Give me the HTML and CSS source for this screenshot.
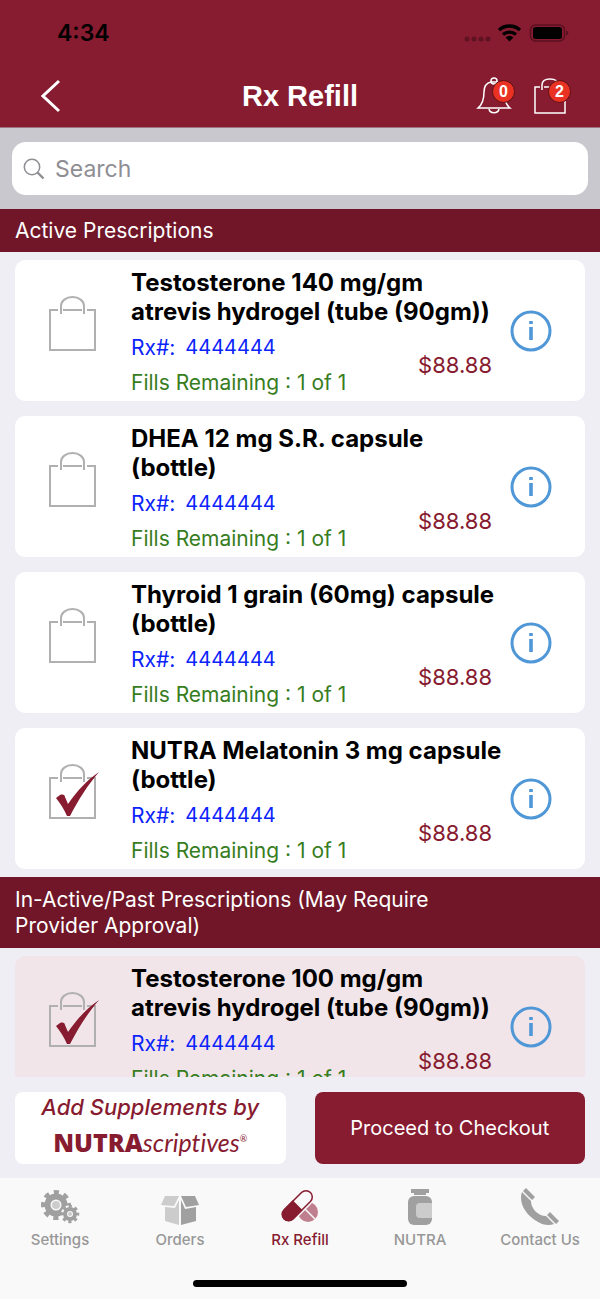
FILE: index.html
```html
<!DOCTYPE html>
<html lang="en">

<head>
    <meta charset="UTF-8">
    <meta name="viewport" content="width=device-width, initial-scale=1">
    <title>Rx Refill</title>
    <link rel="stylesheet" href="styles.css">
</head>

<body>
    <!-- shared icons -->
    <svg class="defs" aria-hidden="true">
        <symbol id="bag" viewBox="0 0 52 58">
            <path d="M10 15H2v40h45V15h-8M15 15h19M13 19v-8c0-5 5-9 11.500-9S36 6 36 11v8" fill="none" stroke="#b0b0b0" stroke-width="2"/>
        </symbol>
        <symbol id="check" viewBox="0 0 52 58">
            <path d="M8 35l4-3c3-1 5 0 5 2l3 7C29 28 39 17 51 9 39 23 31 36 22 53h-3C16 46 12 40 8 35z" fill="#871b30"/>
        </symbol>
        <symbol id="info" viewBox="0 0 42 42">
            <circle cx="21" cy="21" r="19" fill="none" stroke="#4f97d7" stroke-width="3"/>
            <path d="M19.200 11h3.600v3h-3.600zM19.200 17h3.600v13h-3.600z" fill="#4f97d7"/>
        </symbol>
    </svg>

    <header class="header">
        <div class="status">
            <span class="time">4:34</span>
            <svg class="status-icons" width="106" height="20" viewBox="0 0 106 20">
                <g fill="#5f1322">
                    <circle cx="4" cy="16" r="2.500"/>
                    <circle cx="11" cy="16" r="2.500"/>
                    <circle cx="18" cy="16" r="2.500"/>
                    <circle cx="25" cy="16" r="2.500"/>
                </g>
                <g fill="none" stroke="#000" stroke-width="3.400">
                    <path d="M36 7a16 16 0 0 1 21 0"/>
                    <path d="M40 11.500a10 10 0 0 1 13 0"/>
                </g>
                <path d="M42.600 14.500a6 6 0 0 1 7.800 0L46.500 18.500z"/>
                <rect x="67.500" y="2" width="34" height="16" rx="5" fill="none" stroke="#5a1020" stroke-width="1.500"/>
                <rect x="70" y="4" width="29" height="12" rx="2.500"/>
                <path d="M103 7.500c3 1 3 4 0 5z" fill="#5a1020"/>
            </svg>
        </div>
        <nav class="nav">
            <button class="icon-btn back" aria-label="Back">
                <svg width="20" height="34" viewBox="0 0 20 34"><path d="M18 2L2 17l16 15" fill="none" stroke="#fff" stroke-width="3"/></svg>
            </button>
            <h1>Rx Refill</h1>
            <div class="nav-right">
                <button class="icon-btn" aria-label="Notifications">
                    <svg width="36" height="38" viewBox="0 0 36 38" fill="none" stroke="#fff" stroke-width="1.500">
                        <path d="M2 31h32c-5-4-6-9-6-16 0-6-3-9-7-10h-6C10 6 8 10 8 15c0 7-1 12-6 16z"/>
                        <circle cx="18" cy="4" r="3"/>
                        <path d="M13 32c1 5 9 5 10 0"/>
                    </svg>
                    <span class="badge">0</span>
                </button>
                <button class="icon-btn" aria-label="Cart">
                    <svg width="36" height="38" viewBox="0 0 36 38" fill="none" stroke="#fff" stroke-width="1.500">
                        <path d="M8 10H3v26h30V10h-5M12 10h12M10 13V8c0-4 3-6 8-6s8 2 8 6v5"/>
                    </svg>
                    <span class="badge">2</span>
                </button>
            </div>
        </nav>
    </header>

    <div class="search">
        <label class="search-box">
            <svg width="22" height="22" viewBox="0 0 22 22" fill="none" stroke="#8e8e93"><circle cx="9" cy="9" r="7.700" stroke-width="1.500"/><path d="M14.500 14.500l6 6" stroke-width="2.400"/></svg>
            <input type="search" placeholder="Search" aria-label="Search">
        </label>
    </div>

    <main class="list">
        <h2>Active Prescriptions</h2>
        <ul>
            <li class="card">
                <button class="icon-btn pick" aria-label="Add to bag"><svg width="52" height="58"><use href="#bag"/></svg></button>
                <div class="detail">
                    <h3>Testosterone 140 mg/gm atrevis hydrogel (tube (90gm))</h3>
                    <p class="rx"><span>Rx#:</span><span class="num">4444444</span></p>
                    <p class="fills">Fills Remaining : 1 of 1</p>
                    <p class="price">$88.88</p>
                </div>
                <button class="icon-btn" aria-label="Info"><svg width="42" height="42"><use href="#info"/></svg></button>
            </li>
            <li class="card">
                <button class="icon-btn pick" aria-label="Add to bag"><svg width="52" height="58"><use href="#bag"/></svg></button>
                <div class="detail">
                    <h3>DHEA 12 mg S.R. capsule (bottle)</h3>
                    <p class="rx"><span>Rx#:</span><span class="num">4444444</span></p>
                    <p class="fills">Fills Remaining : 1 of 1</p>
                    <p class="price">$88.88</p>
                </div>
                <button class="icon-btn" aria-label="Info"><svg width="42" height="42"><use href="#info"/></svg></button>
            </li>
            <li class="card">
                <button class="icon-btn pick" aria-label="Add to bag"><svg width="52" height="58"><use href="#bag"/></svg></button>
                <div class="detail">
                    <h3>Thyroid 1 grain (60mg) capsule (bottle)</h3>
                    <p class="rx"><span>Rx#:</span><span class="num">4444444</span></p>
                    <p class="fills">Fills Remaining : 1 of 1</p>
                    <p class="price">$88.88</p>
                </div>
                <button class="icon-btn" aria-label="Info"><svg width="42" height="42"><use href="#info"/></svg></button>
            </li>
            <li class="card">
                <button class="icon-btn pick" aria-label="Remove from bag"><svg width="52" height="58"><use href="#bag"/><use href="#check"/></svg></button>
                <div class="detail">
                    <h3>NUTRA Melatonin 3 mg capsule (bottle)</h3>
                    <p class="rx"><span>Rx#:</span><span class="num">4444444</span></p>
                    <p class="fills">Fills Remaining : 1 of 1</p>
                    <p class="price">$88.88</p>
                </div>
                <button class="icon-btn" aria-label="Info"><svg width="42" height="42"><use href="#info"/></svg></button>
            </li>
        </ul>
        <h2 class="inactive">In-Active/Past Prescriptions (May Require Provider Approval)</h2>
        <ul>
            <li class="card past">
                <button class="icon-btn pick" aria-label="Remove from bag"><svg width="52" height="58"><use href="#bag"/><use href="#check"/></svg></button>
                <div class="detail">
                    <h3>Testosterone 100 mg/gm atrevis hydrogel (tube (90gm))</h3>
                    <p class="rx"><span>Rx#:</span><span class="num">4444444</span></p>
                    <p class="fills">Fills Remaining : 1 of 1</p>
                    <p class="price">$88.88</p>
                </div>
                <button class="icon-btn" aria-label="Info"><svg width="42" height="42"><use href="#info"/></svg></button>
            </li>
        </ul>
    </main>

    <div class="actions">
        <button class="supplements">
            <span class="add">Add Supplements by</span>
            <span class="brand"><b>NUTRA</b><i>scriptives</i><sup>®</sup></span>
        </button>
        <button class="checkout">Proceed to Checkout</button>
    </div>

    <footer class="footer">
        <nav class="tabs">
            <a href="#settings">
                <svg width="40" height="40" viewBox="0 0 40 40">
                    <circle cx="16" cy="17" r="8.500" fill="none" stroke="#a0a0a0" stroke-width="6"/>
                    <circle cx="16" cy="17" r="12.500" fill="none" stroke="#a0a0a0" stroke-width="5" stroke-dasharray="5 4.817" stroke-dashoffset="2.500"/>
                    <circle cx="16" cy="17" r="4" fill="#ccc"/>
                    <circle cx="30" cy="26" r="9" fill="#f9f9f9"/>
                    <circle cx="30" cy="26" r="5" fill="none" stroke="#a0a0a0" stroke-width="4"/>
                    <circle cx="30" cy="26" r="7.500" fill="none" stroke="#a0a0a0" stroke-width="3.500" stroke-dasharray="3 2.890" stroke-dashoffset="1.500"/>
                    <circle cx="30" cy="26" r="2" fill="#ccc"/>
                </svg>
                Settings
            </a>
            <a href="#orders">
                <svg width="40" height="40" viewBox="0 0 40 40">
                    <path d="M5 8h14l-5 10-13-1z" fill="#ccc"/>
                    <path d="M21 8h14l4 9-13 2z" fill="#a0a0a0"/>
                    <path d="M5 19l10 1 4-8v25L5 33z" fill="#ccc"/>
                    <path d="M21 12l4 9 11-2v14l-15 4z" fill="#a0a0a0"/>
                </svg>
                Orders
            </a>
            <a href="#refill" class="active">
                <svg width="40" height="40" viewBox="0 0 40 40">
                    <circle cx="28" cy="24" r="10" fill="#c07f8f"/>
                    <path d="M21 17l14 14" stroke="#f9f9f9" stroke-width="1.500"/>
                    <g transform="rotate(45 17 18)">
                        <rect x="8.500" y="-2" width="17" height="40" rx="8.500" fill="#f9f9f9"/>
                        <rect x="10.700" y="-1" width="12.600" height="37" rx="6.300" fill="#f9f9f9" stroke="#871b30" stroke-width="1.500"/>
                        <path d="M10 17h14v13a7 7 0 0 1-14 0z" fill="#871b30"/>
                    </g>
                </svg>
                Rx Refill
            </a>
            <a href="#nutra">
                <svg width="40" height="40" viewBox="0 0 40 40">
                    <path d="M11 1h18v4h-3v2H14V5h-3z" fill="#a0a0a0"/>
                    <rect x="8" y="8" width="24" height="29" rx="6" fill="#a0a0a0"/>
                    <path d="M32 15H20q-4 0-4 4v7q0 4 4 4h12z" fill="#ccc"/>
                </svg>
                NUTRA
            </a>
            <a href="#contact">
                <svg width="40" height="40" viewBox="0 0 40 40" fill="#a0a0a0">
                    <path d="M2 4C-1 12 3 22 11 29c7 6 15 10 23 7l-8-8c-4 0-8-2-11-5-3-4-4-7-4-10z"/>
                    <path d="M6 0l9 9-3 3-9-9zM30 24l9 9-3 3-9-9z"/>
                </svg>
                Contact Us
            </a>
        </nav>
        <div class="home"></div>
    </footer>
</body>

</html>
```

FILE: styles.css
```css
* {
    box-sizing: border-box;
    margin: 0;
    padding: 0;
}

body {
    display: flex;
    flex-direction: column;
    height: 100vh;
    background: #efeef4;
    font-family: Inter, "Liberation Sans", sans-serif;
    color: #000;
}

button {
    border: none;
    background: none;
    font: inherit;
    cursor: pointer;
}

ul {
    list-style: none;
}

svg {
    display: block;
}

.defs {
    position: absolute;
    width: 0;
    height: 0;
}

.icon-btn {
    position: relative;
    flex: none;
}

/* header */
.header {
    height: 128px;
    background: #871b30;
    border-bottom: 1px solid #9b7480;
}

.status {
    display: flex;
    justify-content: space-between;
    align-items: center;
    height: 66px;
    padding: 0 31px 0 57px;
}

.time {
    font-size: 23px;
    font-weight: 600;
}

.nav {
    display: grid;
    grid-template-columns: 1fr auto 1fr;
    align-items: center;
    height: 60px;
    padding: 0 32px;
}

.back {
    justify-self: start;
    padding-left: 9px;
}

.nav h1 {
    font-family: "Liberation Sans", Arial, sans-serif;
    font-size: 29px;
    font-weight: bold;
    line-height: 36px;
    color: #fff;
}

.nav-right {
    display: flex;
    justify-content: flex-end;
    gap: 20px;
}

.badge {
    position: absolute;
    top: 3px;
    right: -3px;
    width: 23px;
    height: 23px;
    border: 1px solid #5c1015;
    border-radius: 50%;
    background: #e93223;
    font: bold 16px/21px "Liberation Sans", Arial, sans-serif;
    color: #fff;
    text-align: center;
}

/* search */
.search {
    padding: 14px 12px;
    background: #c9c8ce;
}

.search-box {
    display: flex;
    align-items: center;
    gap: 10px;
    height: 53px;
    padding: 0 11px;
    border-radius: 14px;
    background: #fff;
}

.search-box input {
    flex: 1;
    min-width: 0;
    border: none;
    outline: none;
    background: none;
    font: 23px Inter, sans-serif;
}

.search-box input::placeholder {
    color: #8e8e93;
}

/* prescriptions */
.list {
    flex: 1;
    min-height: 0;
    overflow-y: auto;
    scrollbar-width: none;
}

.list h2 {
    padding: 9px 120px 8px 15px;
    background: #701628;
    font-size: 21px;
    font-weight: 400;
    line-height: 26px;
    color: #fff;
}

.list .inactive {
    padding-top: 10px;
    padding-bottom: 9px;
}

.list ul {
    display: grid;
    gap: 15px;
    padding: 8px 15px;
}

.card {
    display: flex;
    align-items: center;
    height: 141px;
    padding-right: 33px;
    border-radius: 10px;
    background: #fff;
}

.card.past {
    background: #f1e5e9;
}

.pick {
    align-self: flex-start;
    margin: 35px 31px 0 33px;
}

.detail {
    display: grid;
    grid-template-columns: 1fr auto;
    flex: 1;
    align-self: flex-start;
    padding-top: 8px;
}

.detail h3 {
    grid-column: 1 / 3;
    padding-right: 2px;
    font-size: 24px;
    font-weight: 700;
    line-height: 29px;
}

.detail p {
    font-size: 21px;
    line-height: 35px;
}

.rx {
    display: flex;
    gap: 10px;
    padding-top: 4px;
    color: #0b24fb;
}

.rx .num {
    font-size: 20px;
}

.fills {
    grid-row: 3;
    color: #377d22;
}

.detail .price {
    grid-column: 2;
    grid-row: 2 / 4;
    align-self: center;
    padding: 4px 18px 0 0;
    font-size: 22px;
    color: #871b30;
}

/* bottom buttons */
.actions {
    display: grid;
    grid-template-columns: 1fr 1fr;
    gap: 29px;
    padding: 15px 15px 14px;
}

.actions button {
    height: 72px;
    border-radius: 8px;
}

.supplements {
    display: flex;
    flex-direction: column;
    align-items: center;
    background: #fff;
    color: #871b30;
}

.add {
    font: italic 500 22px/31px Inter, sans-serif;
}

.brand {
    font-family: Lato, sans-serif;
    font-size: 25px;
    font-variant-ligatures: none;
    line-height: 38px;
}

.brand b {
    font-family: "Open Sans", sans-serif;
    font-weight: 800;
}

.brand sup {
    font-size: 9px;
    line-height: 1;
    vertical-align: 10px;
}

.actions .checkout {
    background: #871b30;
    font-size: 20px;
    color: #fff;
}

/* tab bar */
.footer {
    height: 121px;
    padding-top: 10px;
    background: #f9f9f9;
}

.tabs {
    display: grid;
    grid-template-columns: repeat(5, 1fr);
}

.tabs a {
    display: flex;
    flex-direction: column;
    align-items: center;
    gap: 3px;
    font-size: 15px;
    font-weight: 500;
    line-height: 17px;
    color: #979797;
    text-decoration: none;
}

.tabs .active {
    color: #871b30;
}

.home {
    width: 214px;
    height: 7px;
    margin: 32px auto 0;
    border-radius: 4px;
    background: #000;
}
```
